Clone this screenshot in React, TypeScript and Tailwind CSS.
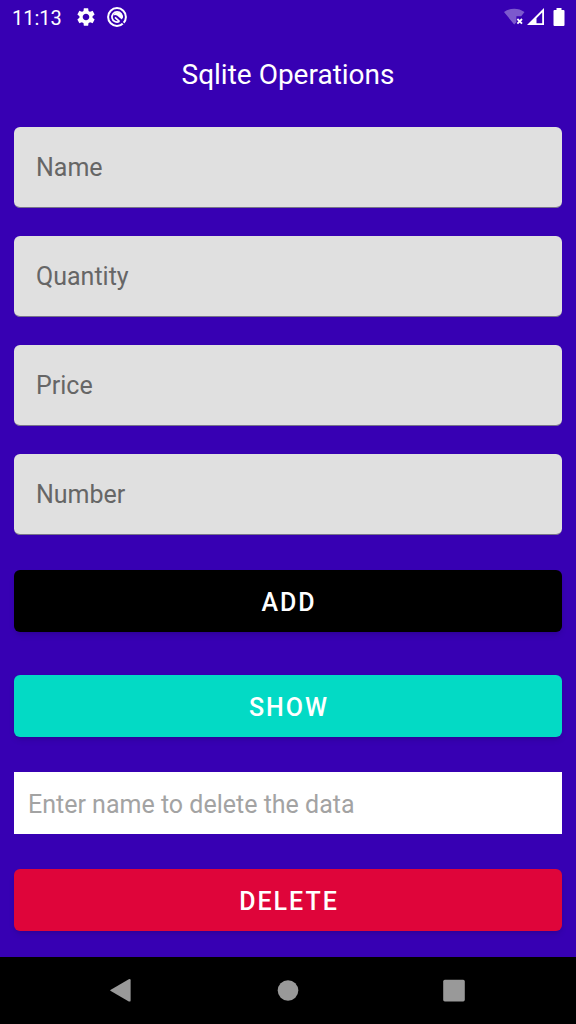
import { useState } from "react";
import { MdSettings } from "react-icons/md";

const fields = ["Name", "Quantity", "Price", "Number"];

function StatusBar() {
    return (
        <header className="flex h-[34px] items-center justify-between pl-3 pr-2.5 text-white">
            <div className="flex items-center">
                <time className="w-[63px] pt-px text-[20px] leading-6">11:13</time>
                <MdSettings size={22} />
                <svg className="ml-2.5" width="20" height="20" viewBox="0 0 20 20" fill="none" stroke="currentColor">
                    <circle cx="10" cy="10" r="8.9" strokeWidth="2" />
                    <path d="M12.2 14.6A5.1 5.1 0 1 1 15 11.2" strokeWidth="1.7" />
                    <path d="M6.4 8.6C7.4 5.6 10.6 4.8 13.2 6.4C15 7.8 15.6 10.4 14.8 12.6L10 8.6Q8 7.6 6.4 8.6Z" fill="currentColor" stroke="none" />
                    <path d="M8 10.4L12.6 14.6" strokeWidth="1.7" />
                    <path d="M14 14L19 19" stroke="#3700b3" strokeWidth="1.2" />
                </svg>
            </div>
            <div className="flex items-center">
                <svg width="22" height="20" viewBox="0 0 22 20">
                    <path d="M0 5C6 .5 14.5 .5 20.5 5L17.2 9.2H12.4V15.2L10.2 17.5Z" fill="currentColor" opacity=".35" />
                    <path d="M13.4 12L18 16.6M18 12L13.4 16.6" stroke="currentColor" strokeWidth="1.8" />
                </svg>
                <svg width="20" height="20" viewBox="0 0 20 20">
                    <path d="M1 18L18 1V18ZM10.5 16.2H16.2V5.6L10.5 11.2Z" fill="currentColor" fillRule="evenodd" />
                </svg>
                <svg className="ml-1.5" width="14" height="20" viewBox="0 0 14 20" fill="currentColor">
                    <path d="M4.5 1H9.5V3H11.5Q12.5 3 12.5 4V18Q12.5 19 11.5 19H2.5Q1.5 19 1.5 18V4Q1.5 3 2.5 3H4.5Z" />
                </svg>
            </div>
        </header>
    );
}

function NavigationBar() {
    return (
        <nav className="flex h-[67px] items-center justify-center gap-[142px] bg-black text-[#999999]">
            <button type="button" aria-label="Back">
                <svg width="24" height="24" viewBox="0 0 24 24" fill="currentColor">
                    <path d="M.8 10.7L18.8 .3Q20.6 -.4 20.6 1.2V21.4Q20.6 23 18.8 22.5L.8 12.1Q-.4 11.4 .8 10.7Z" />
                </svg>
            </button>
            <button type="button" aria-label="Home">
                <svg width="24" height="24" viewBox="0 0 24 24" fill="currentColor">
                    <circle cx="12" cy="11.5" r="10.3" />
                </svg>
            </button>
            <button type="button" aria-label="Overview">
                <svg width="24" height="24" viewBox="0 0 24 24" fill="currentColor">
                    <rect x="1.2" y="0.8" width="21.6" height="21.6" rx="1.6" />
                </svg>
            </button>
        </nav>
    );
}

export default function App() {
    const [values, setValues] = useState<Record<string, string>>({});

    const button = "h-[62px] w-full rounded-md pl-0.5 pt-1 text-[25px] font-medium tracking-[2px] text-white shadow-md";

    return (
        <div className="flex min-h-screen flex-col bg-[#3700b3] font-[Roboto,sans-serif]">
            <StatusBar />

            <main className="flex flex-1 flex-col px-3.5">
                <h1 className="mt-[23px] text-center text-[28px] leading-9 text-white">Sqlite Operations</h1>

                <form className="mt-[34px]" onSubmit={e => e.preventDefault()}>
                    <div className="flex flex-col gap-7">
                        {fields.map(field => (
                            <input
                                key={field}
                                type="text"
                                aria-label={field}
                                placeholder={field}
                                value={values[field] ?? ""}
                                onChange={e => setValues({ ...values, [field]: e.target.value })}
                                className="h-[81px] w-full rounded-md border-b border-[#78738a] bg-[#e0e0e0] px-[22px] text-[25px] text-black outline-none placeholder:text-[#666666]"
                            />
                        ))}
                    </div>

                    <button type="submit" className={`${button} mt-[35px] bg-black`}>ADD</button>
                    <button type="button" className={`${button} mt-[43px] bg-[#03dac5]`}>SHOW</button>
                </form>

                <form className="mt-[35px]" onSubmit={e => e.preventDefault()}>
                    <input
                        type="text"
                        aria-label="Enter name to delete the data"
                        placeholder="Enter name to delete the data"
                        className="h-[62px] w-full bg-white px-3.5 pt-0.5 text-[25px] text-black outline-none placeholder:text-[#a3a3a3]"
                    />
                    <button type="submit" className={`${button} mt-[35px] bg-[#df053a]`}>DELETE</button>
                </form>
            </main>

            <NavigationBar />
        </div>
    );
}
